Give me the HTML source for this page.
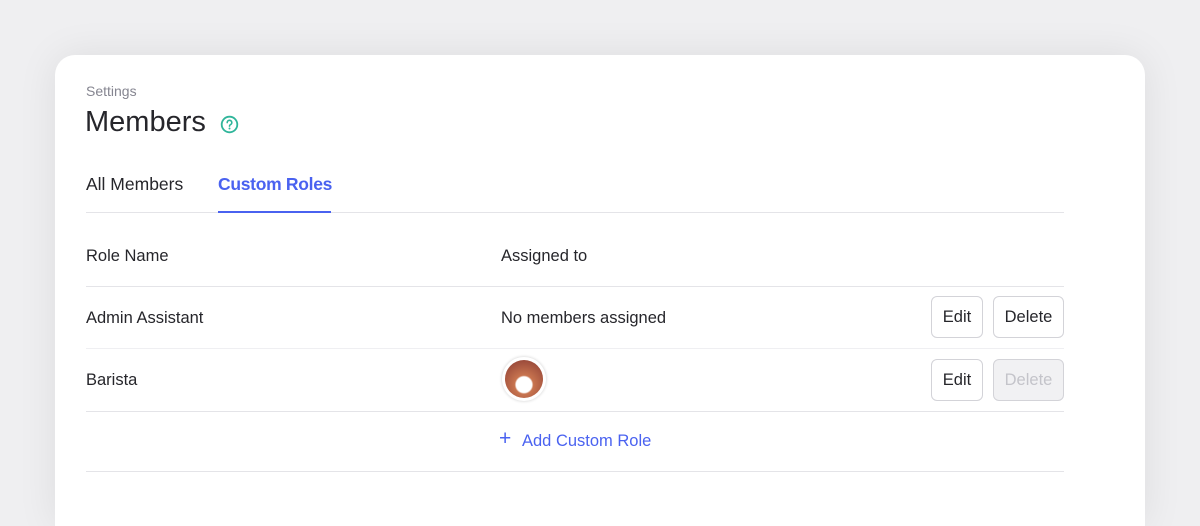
<!DOCTYPE html>
<html style="overflow:hidden;height:526px"><head><style>
html,body{margin:0;width:1200px;height:526px;overflow:hidden}
body{background:#efeff1;font-family:"Liberation Sans",sans-serif;position:relative;color:#26262b}
.card{position:absolute;left:55px;top:55px;width:1090px;height:471px;background:#fff;border-radius:20px 20px 0 0;box-shadow:0 0 40px rgba(0,0,0,.08)}
.a{position:absolute;white-space:nowrap}
.line{position:absolute;left:86px;width:978px;height:1px;background:#e4e4e8}
.btn{position:absolute;border:1px solid #d3d3d8;border-radius:6px;background:#fff;font-size:16.5px;line-height:40px;text-align:center;box-sizing:border-box;height:42px;color:#26262b}
</style></head><body>
<div class="card"></div>
<div class="a" style="left:86px;top:83px;font-size:14px;color:#858590">Settings</div>
<div class="a" style="left:85px;top:106px;font-size:29px;font-weight:500;color:#26262b">Members</div>
<svg class="a" style="left:220px;top:115px" width="19" height="19" viewBox="0 0 19 19"><circle cx="9.5" cy="9.5" r="7.8" fill="none" stroke="#2fb59a" stroke-width="1.8"/><path d="M7.2 7.6a2.3 2.3 0 1 1 3.2 2.1c-.6.3-.9.7-.9 1.4" fill="none" stroke="#2fb59a" stroke-width="1.6" stroke-linecap="round"/><circle cx="9.5" cy="13.5" r="1" fill="#2fb59a"/></svg>
<div class="a" style="left:86px;top:174px;font-size:17.5px">All Members</div>
<div class="a" style="left:218px;top:174px;font-size:17.5px;font-weight:bold;color:#4a62f0;letter-spacing:-0.3px">Custom Roles</div>
<div class="line" style="top:212px;height:1px"></div>
<div class="a" style="left:218px;top:211px;width:113px;height:2px;background:#4a62f0"></div>
<div class="a" style="left:86px;top:247px;font-size:16.5px">Role Name</div>
<div class="a" style="left:501px;top:247px;font-size:16.5px">Assigned to</div>
<div class="line" style="top:286px"></div>
<div class="a" style="left:86px;top:309px;font-size:16.5px">Admin Assistant</div>
<div class="a" style="left:501px;top:309px;font-size:16.5px">No members assigned</div>
<div class="btn" style="left:931px;top:296px;width:52px">Edit</div>
<div class="btn" style="left:993px;top:296px;width:71px">Delete</div>
<div class="line" style="top:348px;background:#efeff2"></div>
<div class="a" style="left:86px;top:371px;font-size:16.5px">Barista</div>
<div class="a" style="left:502px;top:357px;width:44px;height:44px;border-radius:50%;background:#fff;box-shadow:0 0 3px rgba(0,0,0,.2)"><div style="position:absolute;left:3px;top:3px;width:38px;height:38px;border-radius:50%;background:radial-gradient(circle at 50% 65%,#fff 0 25%,#c8744f 30%,#9a4a3a 80%)"></div></div>
<div class="btn" style="left:931px;top:359px;width:52px">Edit</div>
<div class="btn" style="left:993px;top:359px;width:71px;background:#f1f1f3;color:#c4c4ca">Delete</div>
<div class="line" style="top:411px"></div>
<div class="a" style="left:499px;top:429px;font-size:21px;color:#4a62f0;line-height:20px">+</div>
<div class="a" style="left:522px;top:432px;font-size:16.5px;color:#4a62f0">Add Custom Role</div>
<div class="line" style="top:471px"></div>
</body></html>
